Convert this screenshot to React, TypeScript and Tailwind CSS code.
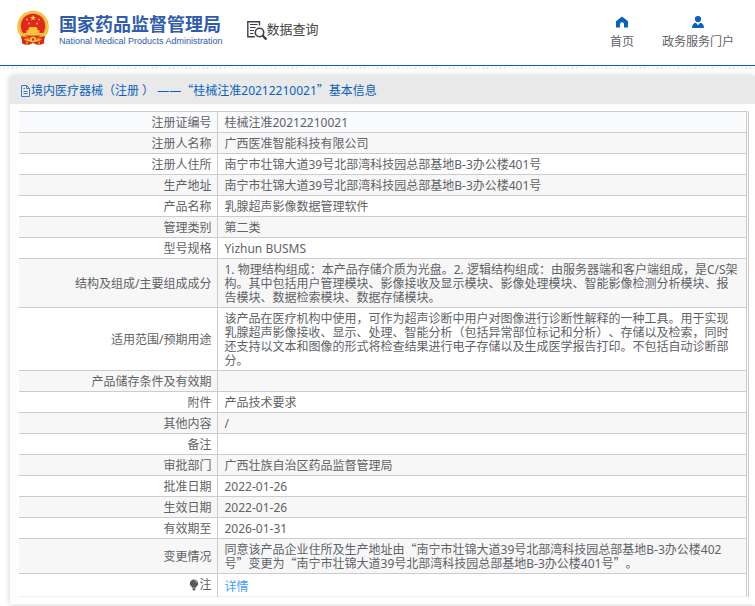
import type { ReactNode } from "react";

type Row = {
  label: string;
  value: ReactNode;
};

const rows: Row[] = [
  { label: "注册证编号", value: "桂械注准20212210021" },
  { label: "注册人名称", value: "广西医准智能科技有限公司" },
  {
    label: "注册人住所",
    value: "南宁市壮锦大道39号北部湾科技园总部基地B-3办公楼401号",
  },
  {
    label: "生产地址",
    value: "南宁市壮锦大道39号北部湾科技园总部基地B-3办公楼401号",
  },
  { label: "产品名称", value: "乳腺超声影像数据管理软件" },
  { label: "管理类别", value: "第二类" },
  { label: "型号规格", value: "Yizhun BUSMS" },
  {
    label: "结构及组成/主要组成成分",
    value:
      "1. 物理结构组成：本产品存储介质为光盘。2. 逻辑结构组成：由服务器端和客户端组成，是C/S架构。其中包括用户管理模块、影像接收及显示模块、影像处理模块、智能影像检测分析模块、报告模块、数据检索模块、数据存储模块。",
  },
  {
    label: "适用范围/预期用途",
    value:
      "该产品在医疗机构中使用，可作为超声诊断中用户对图像进行诊断性解释的一种工具。用于实现乳腺超声影像接收、显示、处理、智能分析（包括异常部位标记和分析）、存储以及检索，同时还支持以文本和图像的形式将检查结果进行电子存储以及生成医学报告打印。不包括自动诊断部分。",
  },
  { label: "产品储存条件及有效期", value: "" },
  { label: "附件", value: "产品技术要求" },
  { label: "其他内容", value: "/" },
  { label: "备注", value: "" },
  { label: "审批部门", value: "广西壮族自治区药品监督管理局" },
  { label: "批准日期", value: "2022-01-26" },
  { label: "生效日期", value: "2022-01-26" },
  { label: "有效期至", value: "2026-01-31" },
  {
    label: "变更情况",
    value: (
      <>
        同意该产品企业住所及生产地址由
        <Quoted>南宁市壮锦大道39号北部湾科技园总部基地B-3办公楼402号</Quoted>
        变更为
        <Quoted>南宁市壮锦大道39号北部湾科技园总部基地B-3办公楼401号</Quoted>。
      </>
    ),
  },
];

export default function App() {
  return (
    <div
      lang="zh-CN"
      className="bg-white pb-0.5 font-['Noto_Sans','Noto_Sans_CJK_SC',sans-serif] text-xs text-[#606266] [text-spacing-trim:space-all]"
    >
      <Header />
      <main className="ml-2.5 mt-[7px] bg-white shadow-[0_0_6px_rgba(0,0,0,0.2)]">
        <h1 className="flex h-7 items-center bg-[#e9e9e9] pl-2.5 pt-0.5 text-xs text-[#0a5fc0]">
          <DocIcon />
          <span>
            境内医疗器械（注册 ） ——
            <Quoted>桂械注准20212210021</Quoted>
            基本信息
          </span>
        </h1>
        <div className="pb-[7px] pl-[9px] pr-1.5 pt-[7px]">
          <div className="border-r border-[#ccc] pr-px">
            <DetailTable />
          </div>
        </div>
      </main>
    </div>
  );
}

function Header() {
  return (
    <header>
      <div className="flex h-[66px] justify-between border-b border-[#0a5cb0] pl-4 pr-[21px]">
        <div className="flex items-start">
          <a href="#home" className="flex pt-2.5 text-[#2f5cab]">
            <Emblem />
            <span className="ml-[9px] flex flex-col pt-px">
              <span className="font-['Noto_Sans_CJK_SC',sans-serif] text-lg font-bold leading-6">
                国家药品监督管理局
              </span>
              <span className="whitespace-nowrap font-['Liberation_Sans',sans-serif] text-[9px] leading-3">
                National Medical Products Administration
              </span>
            </span>
          </a>
          <a href="#search" className="ml-6 flex pt-5 text-[#444]">
            <SearchDocIcon />
            <span className="text-[13px] leading-[18px]">数据查询</span>
          </a>
        </div>
        <nav className="flex gap-7 pt-4">
          <a href="#index" className="flex flex-col items-center gap-1.5">
            <svg viewBox="0 0 12 12" className="h-3 w-3 fill-[#0a5fc0]" aria-hidden="true">
              <path d="M6 0.5 12 5.200V11.500H8V8.200a2 2 0 0 0-4 0v3.300H0V5.200Z" />
            </svg>
            首页
          </a>
          <a href="#portal" className="flex flex-col items-center gap-1.5">
            <svg viewBox="0 0 12 12" className="h-3 w-3 fill-[#0a5fc0]" aria-hidden="true">
              <circle cx="6" cy="3.100" r="3.100" />
              <path d="M0 12C.2 8.800 1.400 7.200 3.800 6.800L6 9.200 8.200 6.800c2.400.4 3.600 2 3.800 5.200Z" />
            </svg>
            政务服务门户
          </a>
        </nav>
      </div>
      <div className="mt-px h-[2px] bg-[repeating-linear-gradient(135deg,#e4e4e4_0_1px,#fff_1px_3px)]" />
    </header>
  );
}

function DetailTable() {
  return (
    <table className="w-full table-fixed border-collapse border-r border-t border-[#ccc] leading-[14px]">
      <colgroup>
        <col className="w-[198px]" />
        <col />
      </colgroup>
      <tbody>
        {rows.map((row, i) => (
          <tr
            key={row.label}
            className={`border-b border-[#ccc] ${
              i === 0 ? "bg-[#f9fafc]" : i % 2 === 1 ? "bg-[#f7f7f7]" : "bg-white"
            }`}
          >
            <th
              scope="row"
              className="h-[21px] border-r border-[#ccc] pb-0.5 pr-[5px] pt-1 text-right font-normal"
            >
              {row.label}
            </th>
            <td className="pb-0.5 pl-[7px] pr-1.5 pt-1">{row.value}</td>
          </tr>
        ))}
        <tr className="border-b border-[#ebeef5]">
          <th
            scope="row"
            className="h-[23px] border-r border-[#ccc] pr-[5px] pt-px text-right font-normal"
          >
            <span className="inline-flex items-center">
              <BulbIcon />注
            </span>
          </th>
          <td className="pl-[7px] pt-1">
            <a href="#detail" className="text-[#409eff]">
              详情
            </a>
          </td>
        </tr>
      </tbody>
    </table>
  );
}

// curly quotes take the full-width form of the Chinese font
function Quoted({ children }: { children: ReactNode }) {
  return (
    <>
      <span className="font-['Noto_Sans_CJK_SC',sans-serif] leading-none">“</span>
      {children}
      <span className="font-['Noto_Sans_CJK_SC',sans-serif] leading-none">”</span>
    </>
  );
}

function DocIcon() {
  return (
    <svg viewBox="0 0 11 12" className="h-3 w-[11px] fill-none stroke-[#3b7cc9]" aria-hidden="true">
      <path d="M1.500.500h5l3 3v8h-8ZM6.500.500v3h3M3.500 3.500h1.500M3.500 6.500h4M3.500 8.500h4" />
    </svg>
  );
}

function BulbIcon() {
  return (
    <svg viewBox="0 0 10 12" className="h-3 w-2.5 fill-[#55585c]" aria-hidden="true">
      <path d="M5 .4a4.200 4.200 0 0 0-4.200 4.200C.8 6.400 2.200 7.300 3.200 8.700h3.600C7.800 7.300 9.200 6.400 9.200 4.600A4.200 4.200 0 0 0 5 .4ZM3.500 9.200h3v1.300L5.700 11.600H4.300l-.8-1.100Z" />
      <path d="M5.500 1.600c1.400.2 2.300 1.100 2.500 2.500" fill="none" stroke="#ddd" strokeWidth=".7" />
    </svg>
  );
}

function SearchDocIcon() {
  return (
    <svg viewBox="0 0 20 20" className="h-5 w-5 fill-none stroke-[#3d3d4d]" aria-hidden="true">
      <path d="M12.500 5.500V1.700H.8v15h7" strokeWidth="1.400" />
      <path d="M3 4.500h7.500M3 7.500h5.500M3 10.500h4M3 13.500h3.500" strokeWidth="1.100" />
      <circle cx="12.500" cy="12.500" r="4.200" strokeWidth="1.600" />
      <path d="m15.500 15.500 4 4" strokeWidth="2.400" />
    </svg>
  );
}

function Emblem() {
  return (
    <svg viewBox="0 0 34 36" className="h-9 w-[34px]" aria-hidden="true">
      <path
        d="M5.500 26h23l-.7 7.600c-2 .9-4 1.400-6.800 1.200L17 33l-4 1.800c-2.800.2-4.800-.3-6.800-1.200Z"
        fill="#d9231b"
      />
      <circle cx="17" cy="16.500" r="15.700" fill="#eeb52f" />
      <circle cx="17" cy="16.500" r="14.300" fill="none" stroke="#f5cc50" strokeWidth="1.200" />
      <circle cx="17" cy="16" r="12.200" fill="#e3261d" />
      <path
        d="m17 5 .8 2.100h2.200l-1.800 1.400.7 2.100L17 9.300l-1.900 1.300.7-2.100L14 7.100h2.200Z"
        fill="#f9d34c"
      />
      <g fill="#f6c33b">
        <circle cx="11" cy="9.500" r="1" />
        <circle cx="23" cy="9.500" r="1" />
        <circle cx="13" cy="13.500" r="1" />
        <circle cx="21" cy="13.500" r="1" />
        <path d="m12.500 18.500 1-1.500h7l1 1.500v1.700h2V23h3.300v2.400H7.200V23h3.300v-2.800h2Z" />
      </g>
      <path d="M5 26c7 2 17 2 24 0l-1 4H6Z" fill="#e3261d" />
      <circle cx="17" cy="29.500" r="3" fill="#f5c23b" />
      <circle cx="17" cy="29.500" r="1.200" fill="#d9231b" />
      <path d="m8.500 29.500 5-.5M20.500 29l5 .5M11 31.500v3M23 31.500v3" stroke="#efb52f" strokeWidth="1.300" />
    </svg>
  );
}
